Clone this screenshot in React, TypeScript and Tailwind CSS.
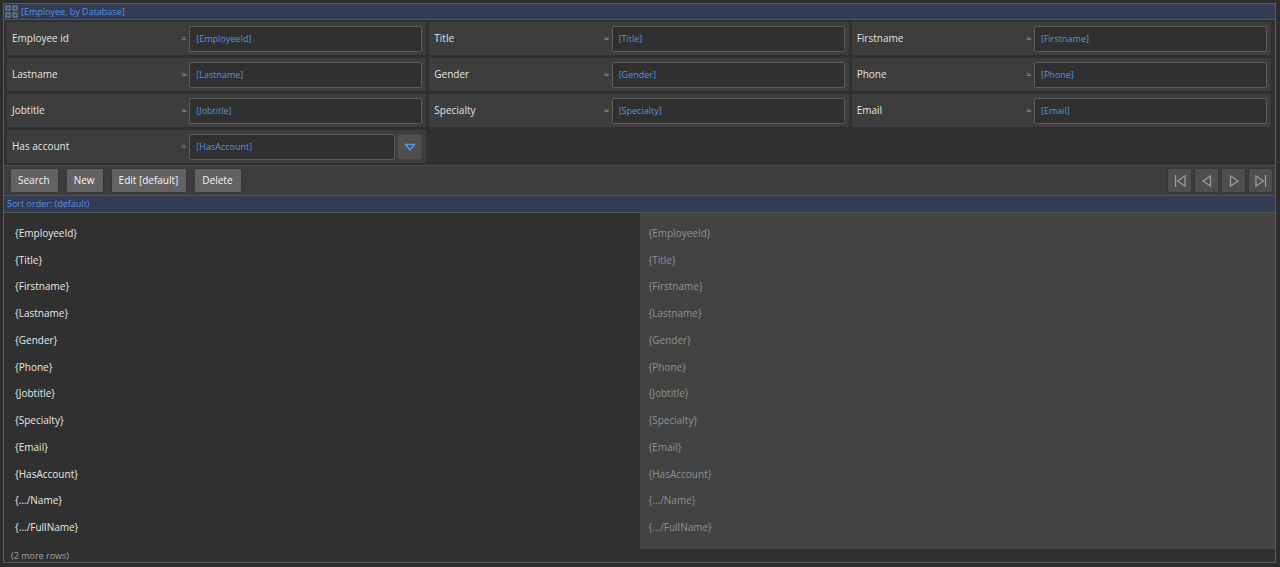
import { useState } from 'react'
import clsx from 'clsx'

interface Field {
  id: string
  label: string
  operator: '=' | '≈'
  hasMenu?: boolean
}

const fields: Field[] = [
  { id: 'EmployeeId', label: 'Employee id', operator: '=' },
  { id: 'Title', label: 'Title', operator: '≈' },
  { id: 'Firstname', label: 'Firstname', operator: '≈' },
  { id: 'Lastname', label: 'Lastname', operator: '≈' },
  { id: 'Gender', label: 'Gender', operator: '≈' },
  { id: 'Phone', label: 'Phone', operator: '≈' },
  { id: 'Jobtitle', label: 'Jobtitle', operator: '≈' },
  { id: 'Specialty', label: 'Specialty', operator: '≈' },
  { id: 'Email', label: 'Email', operator: '≈' },
  { id: 'HasAccount', label: 'Has account', operator: '=', hasMenu: true },
]

const rows = [...fields.map((f) => f.id), '.../Name', '.../FullName']

const actions = ['Search', 'New', 'Edit [default]', 'Delete']

const pagers = [
  { label: 'First', path: 'M3.5 2v12M13 3v10L5.5 8z' },
  { label: 'Previous', path: 'M11.5 3v10L4 8z' },
  { label: 'Next', path: 'M4.5 3v10L12 8z' },
  { label: 'Last', path: 'M3 3v10L10.5 8zM12.5 2v12' },
]

function GridIcon() {
  return (
    <svg width="13" height="13" viewBox="0 0 13 13" fill="#2b4a7c" stroke="#8a8a8a" className="shrink-0">
      <rect x="1" y="1" width="4" height="4" />
      <rect x="8" y="1" width="4" height="4" />
      <rect x="1" y="8" width="4" height="4" />
      <rect x="8" y="8" width="4" height="4" />
    </svg>
  )
}

function SearchField({ field }: { field: Field }) {
  const [value, setValue] = useState(`[${field.id}]`)

  return (
    <div className="flex h-[33px] items-center bg-[#3d3d3d] pr-1 pl-[5px]">
      <label htmlFor={field.id} className="flex-1 text-[10px] text-[#e4e4e4]">
        {field.label}
      </label>
      <span className="w-2 text-[9px] text-[#a0a0a0]">{field.operator}</span>
      <div className="flex w-[233px] gap-0.5">
        <input
          id={field.id}
          value={value}
          onChange={(e) => setValue(e.target.value)}
          className="h-[26px] min-w-0 flex-1 rounded-xs border border-[#5c5c5c] bg-[#303030] px-1.5 text-[9px] text-[#5392e4] outline-none focus:border-[#5392e4]"
        />
        {field.hasMenu && (
          <button
            aria-label={`${field.label} options`}
            className="flex h-[26px] w-[25px] items-center justify-center rounded-xs border border-[#444] bg-[#4f4f4f]"
          >
            <svg width="12" height="10" viewBox="0 0 12 10" fill="none" stroke="#5392e4" strokeWidth="1.5">
              <path d="M1.5 2.500h9L6 8z" />
            </svg>
          </button>
        )}
      </div>
    </div>
  )
}

function RowList({ muted }: { muted?: boolean }) {
  return (
    <ul
      className={clsx(
        'grid auto-rows-fr pt-[7px] pr-[11px] pb-2 text-[10px]',
        muted ? 'bg-[#434343] pl-[9px] text-[#8f8f8f]' : 'pl-[11px] text-[#e8e8e8]'
      )}
    >
      {rows.map((row) => (
        <li key={row} className="flex items-center">{`{${row}}`}</li>
      ))}
    </ul>
  )
}

export default function App() {
  return (
    <div className="flex min-h-screen flex-col bg-[#2d2d2d] p-[3px] pb-1 font-['Open_Sans',sans-serif]">
      <main className="mr-px flex flex-1 flex-col border border-[#5a5a5a] bg-[#303030]">
        <header className="flex h-4 items-center gap-[3px] border-b border-[#555] bg-[#343b55] px-px text-[9px] text-[#5392e4]">
          <GridIcon />
          <h1>[Employee, by Database]</h1>
        </header>

        {/* Search fields */}
        <form
          className="grid grid-cols-3 gap-[3px] py-0.5 pr-1 pl-[3px]"
          onSubmit={(e) => e.preventDefault()}
        >
          {fields.map((field) => (
            <SearchField key={field.id} field={field} />
          ))}
        </form>

        {/* Toolbar */}
        <div className="flex h-[30px] items-center justify-between border-t border-[#4c4c4c] bg-[#3d3d3d] pr-0.5 pl-1.5">
          <div className="flex gap-[7px]">
            {actions.map((action) => (
              <button
                key={action}
                className="h-[25px] rounded-xs border border-[#383838] bg-[#636363] pr-2 pl-[7px] text-[10px] text-[#f4f4f4] hover:bg-[#707070]"
              >
                {action}
              </button>
            ))}
          </div>
          <div className="flex gap-0.5">
            {pagers.map((pager) => (
              <button
                key={pager.label}
                aria-label={pager.label}
                className="flex size-[25px] items-center justify-center rounded-xs border border-[#383838] bg-[#4f4f4f]"
              >
                <svg width="16" height="16" viewBox="0 0 16 16" fill="none" stroke="#9a9a9a" strokeWidth="1.3">
                  <path d={pager.path} />
                </svg>
              </button>
            ))}
          </div>
        </div>

        <div className="flex h-[18px] items-center border-y border-[#555] bg-[#343b55] px-[3px] text-[9px] text-[#5392e4]">
          Sort order: (default)
        </div>

        {/* Result columns */}
        <div className="grid flex-1 grid-cols-2">
          <RowList />
          <RowList muted />
        </div>

        <footer className="flex h-[13px] items-center px-[7px] text-[9px] text-[#a0a0a0]">
          (2 more rows)
        </footer>
      </main>
    </div>
  )
}
